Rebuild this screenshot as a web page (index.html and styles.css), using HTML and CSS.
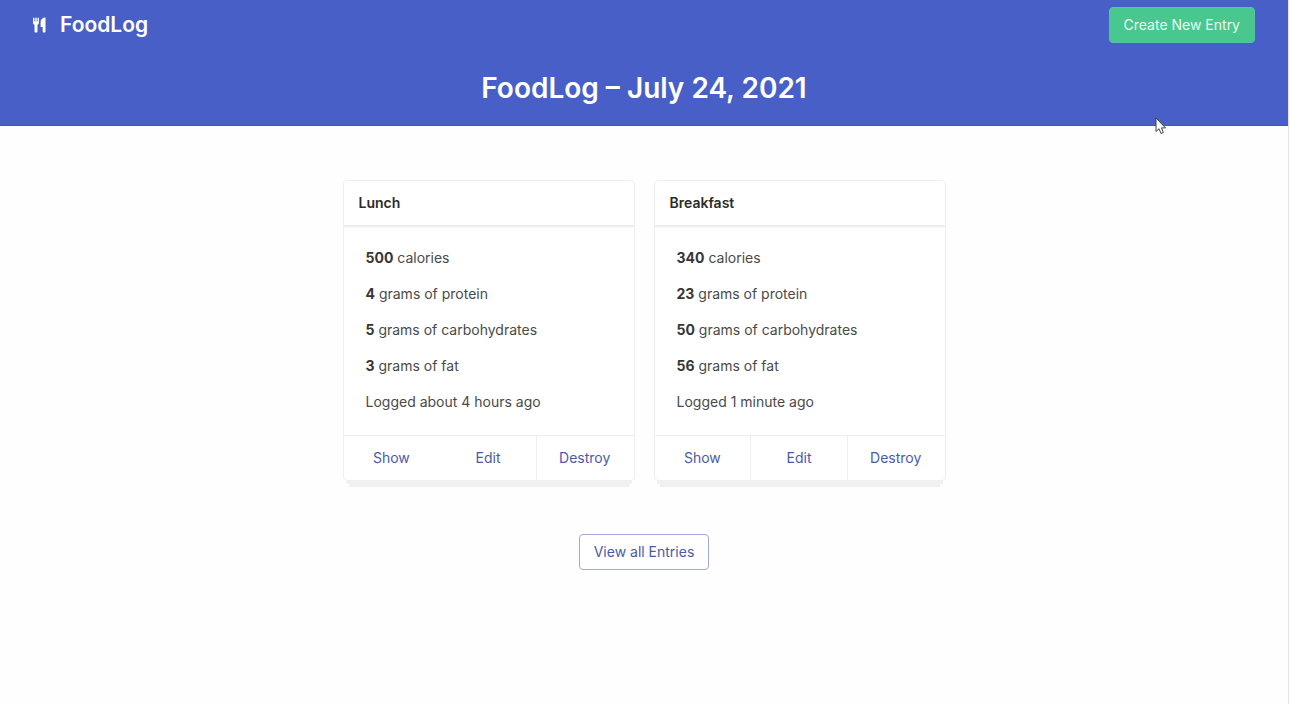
FILE: index.html
```html
<!DOCTYPE html>
<html lang="en">
<head>
<meta charset="utf-8">
<meta name="viewport" content="width=device-width, initial-scale=1">
<title>FoodLog</title>
<link rel="stylesheet" href="styles.css">
</head>
<body>
<div class="page">
  <header class="hero">
    <nav class="navbar">
      <a class="brand" href="#">
        <svg class="brand-icon" viewBox="0 0 13 16" width="13" height="16" aria-hidden="true">
          <path fill="currentColor" d="M0 .8h1.400v3.600h.8V.8h1.500v3.600h.8V.8h1.400v4.800c0 1.200-.6 1.900-1.400 2.200v7c0 .5-.3.800-.7.800H2.200c-.4 0-.7-.3-.7-.8v-7C.6 7.500 0 6.800 0 5.600zM12.500.5v14.300c0 .5-.3.800-.7.800h-1.400c-.4 0-.7-.3-.7-.8V10H8.300c-.4 0-.7-.2-.7-.6V5c0-2.500 2.400-4.500 4.900-4.500z"/>
        </svg>
        <span>FoodLog</span>
      </a>
      <a class="button button-success" href="#">Create New Entry</a>
    </nav>
    <h1 class="title">FoodLog – July 24, 2021</h1>
  </header>
  <main class="content">
    <div class="cards">
      <article class="card">
        <header class="card-header"><h2 class="card-title">Lunch</h2></header>
        <div class="card-body">
          <p><strong>500</strong> calories</p>
          <p><strong>4</strong> grams of protein</p>
          <p><strong>5</strong> grams of carbohydrates</p>
          <p><strong>3</strong> grams of fat</p>
          <p>Logged about 4 hours ago</p>
        </div>
        <footer class="card-footer">
          <a class="card-link card-link-open" href="#">Show</a>
          <a class="card-link" href="#">Edit</a>
          <a class="card-link" href="#">Destroy</a>
        </footer>
      </article>
      <article class="card">
        <header class="card-header"><h2 class="card-title">Breakfast</h2></header>
        <div class="card-body">
          <p><strong>340</strong> calories</p>
          <p><strong>23</strong> grams of protein</p>
          <p><strong>50</strong> grams of carbohydrates</p>
          <p><strong>56</strong> grams of fat</p>
          <p>Logged 1 minute ago</p>
        </div>
        <footer class="card-footer">
          <a class="card-link" href="#">Show</a>
          <a class="card-link" href="#">Edit</a>
          <a class="card-link" href="#">Destroy</a>
        </footer>
      </article>
    </div>
    <a class="button button-outline" href="#">View all Entries</a>
  </main>
</div>
<svg class="pointer" viewBox="0 0 12 18" width="12" height="18" aria-hidden="true">
  <path d="M1 1v13.500l3-2.800 2 4.800 2.400-1-2-4.600h4.100z" fill="#fff" stroke="#444" stroke-width="1" stroke-linejoin="round"/>
</svg>
</body>
</html>
```
FILE: styles.css
```css
* {
  box-sizing: border-box;
}

body {
  margin: 0;
  background: #fefefe;
  color: #4a4a4a;
  font-family: Inter, "Liberation Sans", sans-serif;
  font-size: 14px;
  line-height: 22px;
}

h1, h2, p {
  margin: 0;
}

a {
  text-decoration: none;
}

.page {
  min-height: 100vh;
  margin-right: 1px;
  border-right: 1px solid #e4e4e8;
}

.hero {
  background: #485fc7;
  color: #fff;
  padding-bottom: 18px;
  border-bottom: 1px solid #4257b8;
}

.navbar {
  display: flex;
  align-items: center;
  justify-content: space-between;
  height: 50px;
  padding: 0 33px;
}

.brand {
  display: flex;
  align-items: center;
  gap: 14px;
  color: #fff;
  font-size: 21px;
  font-weight: 600;
  line-height: 30px;
}

.title {
  padding-top: 20px;
  font-size: 28px;
  font-weight: 600;
  line-height: 37px;
  text-align: center;
}

.button {
  display: inline-block;
  padding: 6px 14px;
  border: 1px solid transparent;
  border-radius: 4px;
  font-size: 14px;
  line-height: 22px;
}

.button-success {
  background: #48c78e;
  border-color: #54c4a0;
  color: #e9faf2;
}

.button-outline {
  border-color: #a3acd9;
  background: #fff;
  color: #4a5ba8;
}

.content {
  display: flex;
  flex-direction: column;
  align-items: center;
  gap: 54px;
  padding: 55px 24px;
}

.cards {
  display: flex;
  flex-wrap: wrap;
  justify-content: center;
  gap: 21px;
}

.card {
  width: 290px;
  background: #fff;
  border-radius: 4px;
  box-shadow: 0 0 0 1px #f0f0f0, 0 6px 0 -2px #f1f1f1, 0 12px 1px -5px #f1f1f1;
}

.card-header {
  padding: 11px 15px;
  border-radius: 4px 4px 0 0;
  box-shadow: 0 2px 2px #e9e9e9;
}

.card-title {
  color: #2b2b2b;
  font-size: 14px;
  font-weight: 600;
}

.card-body {
  display: grid;
  gap: 14px;
  padding: 22px;
}

strong {
  color: #363636;
  font-weight: 700;
}

.card-footer {
  display: flex;
  border-top: 1px solid #ededed;
}

.card-link {
  flex: 1;
  padding: 11px;
  border-right: 1px solid #ededed;
  color: #4a5ba8;
  text-align: center;
}

.card-link:last-child,
.card-link-open {
  border-right-color: transparent;
}

.pointer {
  position: absolute;
  top: 117px;
  left: 1155px;
}
```
